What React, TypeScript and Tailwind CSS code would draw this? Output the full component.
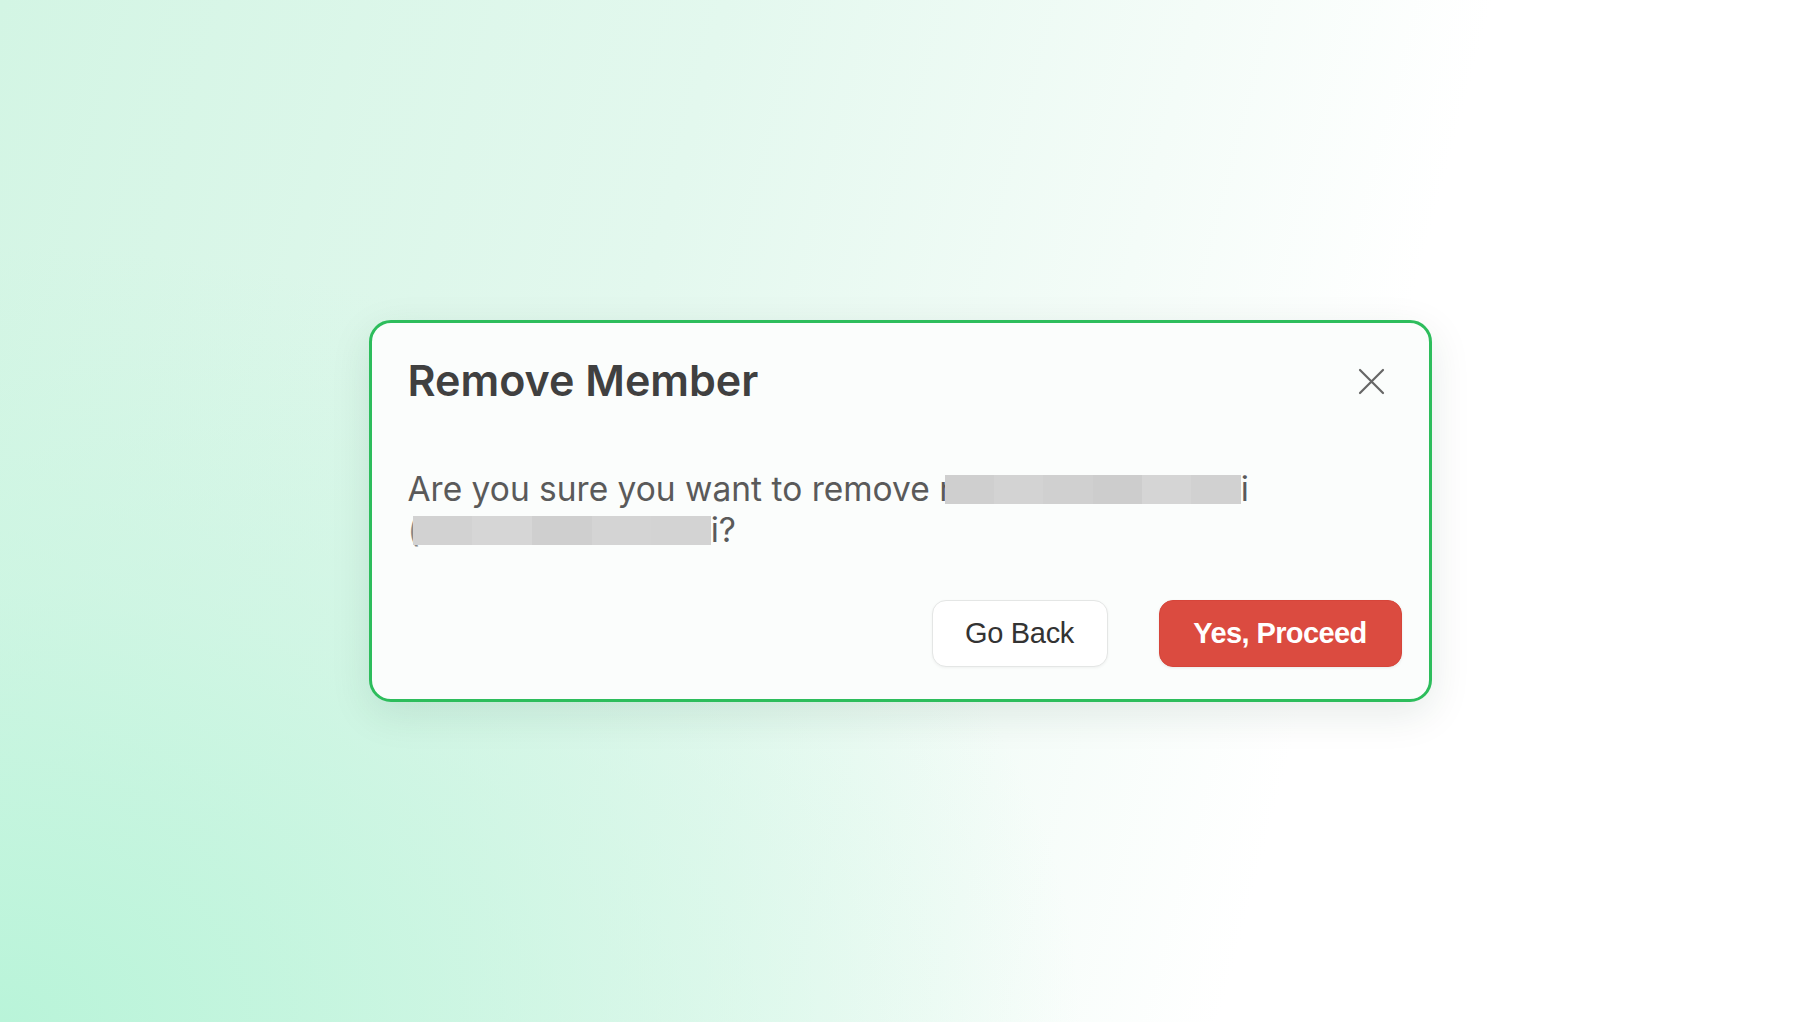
import React from "react";

function Redact({ w, segs }: { w: number; segs: string[] }) {
  return (
    <span
      className="relative inline-flex h-[29px] align-[-3px] overflow-hidden"
      style={{ width: w }}
    >
      {segs.map((c, i) => (
        <span key={i} className="h-full flex-1" style={{ backgroundColor: c }} />
      ))}
    </span>
  );
}

export default function App() {
  return (
    <div className="flex h-[1022px] w-full items-center justify-center bg-[radial-gradient(ellipse_75%_95%_at_0%_100%,#b9f4d9_0%,rgba(200,245,224,0.6)_45%,rgba(255,255,255,0)_80%),linear-gradient(105deg,#d3f5e4_0%,#e3f8ee_35%,#f4fcf8_58%,#ffffff_72%)]">
      <div className="w-[1063px] rounded-[22px] border-[3px] border-[#2dbd5c] bg-[#fbfdfc] pl-[36px] pr-[27px] pt-[31px] pb-[32px] shadow-[0_12px_40px_rgba(20,60,40,0.10)]">
        <div className="flex items-center justify-between">
          <h1 className="font-['Inter',sans-serif] text-[43px] leading-[52px] font-semibold text-[#404040]">
            Remove Member
          </h1>
          <svg
            width="27"
            height="27"
            viewBox="0 0 27 27"
            className="mr-[17px] mt-[2px]"
            fill="none"
            stroke="#666"
            strokeWidth="2.2"
            strokeLinecap="round"
          >
            <path d="M2 2 L25 25 M25 2 L2 25" />
          </svg>
        </div>
        <p className="mt-[63px] font-['Inter',sans-serif] text-[33.5px] leading-[41px] text-[#5a5a5a]">
          Are you sure you want to remove r
          <span className="-ml-[7px]">
            <Redact w={296} segs={["#cfcfcf", "#d3d3d3", "#d0d0d0", "#cdcdcd", "#d5d5d5", "#d1d1d1"]} />
          </span>
          i{" "}
          <span className="whitespace-nowrap">
            <span className="text-[#888]">(</span>
            <span className="-ml-[7px]">
              <Redact w={298} segs={["#d2d2d2", "#d6d6d6", "#cfcfcf", "#d4d4d4", "#d3d3d3"]} />
            </span>
            i?
          </span>
        </p>
        <div className="mt-[49px] flex justify-end gap-[51px]">
          <button className="h-[67px] w-[176px] rounded-[14px] border-[1.5px] border-[#e4e6e5] bg-white font-['Liberation_Sans',Arial,sans-serif] text-[29px] font-normal tracking-[-0.3px] text-[#333333] shadow-[0_1px_3px_rgba(0,0,0,0.05)]">
            Go Back
          </button>
          <button className="h-[67px] w-[243px] rounded-[14px] border border-[#d6453a] bg-[#db4b40] font-['Liberation_Sans',Arial,sans-serif] text-[29px] font-bold tracking-[-0.6px] text-white shadow-[0_1px_3px_rgba(0,0,0,0.08)]">
            Yes, Proceed
          </button>
        </div>
      </div>
    </div>
  );
}
